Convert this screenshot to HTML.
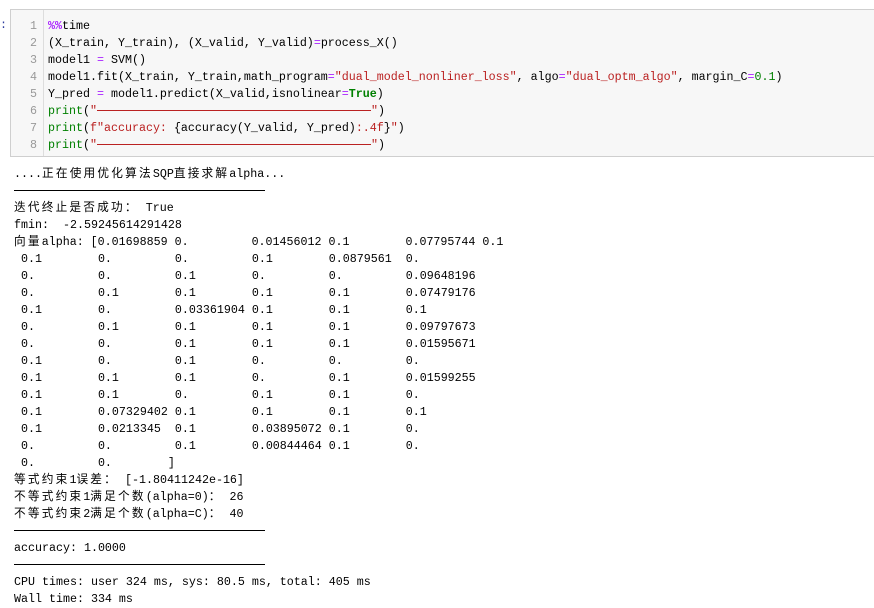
<!DOCTYPE html>
<html><head><meta charset="utf-8"><style>
body{margin:0;background:#fff;width:874px;height:608px;overflow:hidden;position:relative;font-family:"Liberation Mono","Noto Sans CJK SC",monospace;font-size:11.67px;color:#000}
pre{margin:0;font:inherit;line-height:17px;white-space:pre}
.c{font-family:"Noto Sans CJK SC",sans-serif;letter-spacing:2.2px;line-height:8px;vertical-align:baseline}
.cell{position:absolute;left:10px;top:9px;width:870px;height:148px;background:#f7f7f7;border:1px solid #cfcfcf;box-sizing:border-box}
.gut{position:absolute;left:0;top:0;width:32px;height:146px;border-right:1px solid #ddd;}
.nums{position:absolute;left:0;top:8px;width:26px;text-align:right;color:#999}
.code{position:absolute;left:37px;top:8px}
.m{color:#aa22ff}.mb{color:#aa22ff;font-weight:bold}.s{color:#ba2121}.g{color:#008000}.gb{color:#008000;font-weight:bold}
.prompt{position:absolute;left:0;top:17px;color:#303f9f;line-height:17px}
.out{position:absolute;left:14px;top:166px}
.hl{display:inline-block;width:251px;height:0;border-top:1px solid #000;vertical-align:middle}
.sl{display:inline-block;width:274px;height:0;border-top:1px solid #ba2121;vertical-align:middle}
</style></head><body>
<div class="prompt">:</div>
<div class="cell"><div class="gut"></div>
<pre class="nums">1
2
3
4
5
6
7
8</pre>
<pre class="code"><span class="mb">%%</span>time
(X_train, Y_train), (X_valid, Y_valid)<span class="m">=</span>process_X()
model1 <span class="m">=</span> SVM()
model1.fit(X_train, Y_train,math_program<span class="m">=</span><span class="s">"dual_model_nonliner_loss"</span>, algo<span class="m">=</span><span class="s">"dual_optm_algo"</span>, margin_C<span class="m">=</span><span class="g">0.1</span>)
Y_pred <span class="m">=</span> model1.predict(X_valid,isnolinear<span class="m">=</span><span class="gb">True</span>)
<span class="g">print</span>(<span class="s">"<span class="sl"></span>"</span>)
<span class="g">print</span>(<span class="s">f"accuracy: </span>{accuracy(Y_valid, Y_pred)<span class="s">:.4f</span>}<span class="s">"</span>)
<span class="g">print</span>(<span class="s">"<span class="sl"></span>"</span>)</pre>
</div>
<pre class="out">....<span class="c">正在使用优化算法</span>SQP<span class="c">直接求解</span>alpha...
<span class="hl"></span>
<span class="c">迭代终止是否成功：</span> True
fmin:  -2.59245614291428
<span class="c">向量</span>alpha: [0.01698859 0.         0.01456012 0.1        0.07795744 0.1
 0.1        0.         0.         0.1        0.0879561  0.
 0.         0.         0.1        0.         0.         0.09648196
 0.         0.1        0.1        0.1        0.1        0.07479176
 0.1        0.         0.03361904 0.1        0.1        0.1
 0.         0.1        0.1        0.1        0.1        0.09797673
 0.         0.         0.1        0.1        0.1        0.01595671
 0.1        0.         0.1        0.         0.         0.
 0.1        0.1        0.1        0.         0.1        0.01599255
 0.1        0.1        0.         0.1        0.1        0.
 0.1        0.07329402 0.1        0.1        0.1        0.1
 0.1        0.0213345  0.1        0.03895072 0.1        0.
 0.         0.         0.1        0.00844464 0.1        0.
 0.         0.        ]
<span class="c">等式约束</span>1<span class="c">误差：</span> [-1.80411242e-16]
<span class="c">不等式约束</span>1<span class="c">满足个数</span>(alpha=0)<span class="c">：</span> 26
<span class="c">不等式约束</span>2<span class="c">满足个数</span>(alpha=C)<span class="c">：</span> 40
<span class="hl"></span>
accuracy: 1.0000
<span class="hl"></span>
CPU times: user 324 ms, sys: 80.5 ms, total: 405 ms
Wall time: 334 ms</pre>
</body></html>
